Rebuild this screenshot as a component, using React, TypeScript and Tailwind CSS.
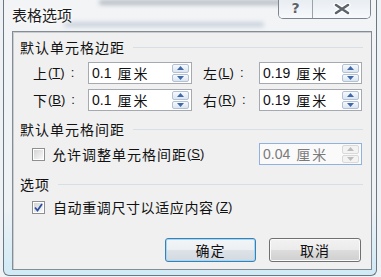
import React from "react";

const latin = "font-['Liberation_Sans','Noto_Sans_CJK_SC',sans-serif]";
const cjk = "font-['Noto_Sans_CJK_SC','Liberation_Sans',sans-serif]";

const Spinner = ({ disabled = false }: { disabled?: boolean }) => {
  const arrow = disabled ? "#bdbdbd" : "#3f69a8";
  const face = disabled
    ? "border-[#d9d9d9] bg-[#f3f3f3]"
    : "border-[#b3c1d3] bg-gradient-to-b from-[#f7fafd] to-[#dbe5f1]";
  return (
    <div className="flex flex-col gap-px w-[17px] py-px">
      <div className={`flex-1 flex items-center justify-center border rounded-[2px] ${face}`}>
        <svg width="7" height="4" viewBox="0 0 7 4">
          <path d="M0 4 L3.5 0 L7 4 Z" fill={arrow} />
        </svg>
      </div>
      <div className={`flex-1 flex items-center justify-center border rounded-[2px] ${face}`}>
        <svg width="7" height="4" viewBox="0 0 7 4">
          <path d="M0 0 L3.5 4 L7 0 Z" fill={arrow} />
        </svg>
      </div>
    </div>
  );
};

const SpinBox = ({
  value,
  className,
  disabled = false,
}: {
  value: string;
  className: string;
  disabled?: boolean;
}) => (
  <div
    className={`flex items-stretch h-[22px] border pl-[3px] pr-[2px] ${
      disabled ? "border-[#8fb3de] bg-[#fafafa] text-[#7a7a7a]" : "border-[#a5a9b0] bg-white text-[#111]"
    } ${className}`}
  >
    <div className="flex-1 flex items-center">
      <span className={`${latin} text-[14px]`}>{value}</span>
      <span className={`${cjk} text-[14px] tracking-[2px] ml-[6px]`}>厘米</span>
    </div>
    <Spinner disabled={disabled} />
  </div>
);

const Label = ({ ch, hot }: { ch: string; hot: string }) => (
  <div className="flex items-center text-[#111]">
    <span className={`${cjk} text-[14px]`}>{ch}</span>
    <span className={`${latin} text-[13px] ml-[1px]`}>
      (<span className="underline underline-offset-[1px]">{hot}</span>)
    </span>
    <span className={`${latin} text-[13px] ml-[6px]`}>:</span>
  </div>
);

const Section = ({ title }: { title: string }) => (
  <div className="flex items-center h-[20px] gap-[8px]">
    <span className={`${cjk} text-[14px] tracking-[1px] text-[#111]`}>{title}</span>
    <div className="flex-1 h-px bg-[#d6dee6]" />
  </div>
);

const CheckBox = ({ checked = false }: { checked?: boolean }) => (
  <div className="w-[13px] h-[13px] border border-[#8e8f8f] bg-white p-px shrink-0">
    <div className="w-full h-full bg-gradient-to-br from-[#d4d4d4] to-[#f9f9f9] flex items-center justify-center">
      {checked && (
        <svg width="9" height="9" viewBox="0 0 9 9">
          <path d="M1 4.5 L3.5 7.5 L8 1" stroke="#2c4fa0" strokeWidth="1.8" fill="none" />
        </svg>
      )}
    </div>
  </div>
);

export default function App() {
  return (
    <div className="w-[381px] h-[277px] bg-[#eef2f5] overflow-hidden">
      <div className="ml-[3px] mr-[4px] h-[276px] flex flex-col border-x border-b border-[#6d7782] rounded-b-[6px] bg-[linear-gradient(to_bottom,#f2f4f6_0%,#eef2f5_75%,#cfeaf6_100%)]">
        {/* title bar, with the blurred page behind the glass */}
        <div className="relative h-[31px] shrink-0 flex justify-between">
          <div className="absolute left-[95px] top-[0px] w-[190px] h-[5px] rounded-full blur-[2px] bg-[#7d8894] opacity-50" />
          <div className="absolute left-[60px] top-[22px] w-[200px] h-[5px] rounded-full blur-[2px] bg-[#8fa0b5] opacity-40" />
          <div className={`relative pl-[8px] pt-[4px] ${cjk} text-[15px] text-[#1b1b1b] [text-shadow:0_0_6px_#fff,0_0_3px_#fff]`}>
            表格选项
          </div>
          <div className="relative flex h-[19px] mr-[5px] border-x border-b border-[#7d8590] rounded-b-[5px] overflow-hidden shadow-[inset_0_-1px_0_#ffffff]">
            <div className="w-[34px] flex items-center justify-center border-r border-[#9aa2ab] bg-[linear-gradient(to_bottom,#e8edf2,#f7f9fb)]">
              <span className="font-['DejaVu_Sans',sans-serif] font-bold text-[14px] text-[#5d6268] [text-shadow:0_0_1px_#fff,0_0_2px_#fff] leading-none mt-[-2px]">
                ?
              </span>
            </div>
            <div className="w-[57px] flex items-center justify-center bg-[linear-gradient(to_bottom,#e8edf2,#f7f9fb)]">
              <svg width="18" height="12" viewBox="0 0 18 12">
                <path d="M3 2 L15 10 M15 2 L3 10" stroke="#ffffff" strokeWidth="5" strokeLinecap="round" />
                <path d="M3 2 L15 10 M15 2 L3 10" stroke="#5e646b" strokeWidth="2.6" strokeLinecap="round" />
              </svg>
            </div>
          </div>
        </div>

        {/* client area */}
        <div className="flex-1 ml-[8px] mr-[4px] mb-[5px] border border-[#868c93] bg-[#f0f0f0] shadow-[inset_1px_1px_0_#c9cdd2] flex flex-col pl-[7px] pr-[8px] pt-[5px]">
          <Section title="默认单元格边距" />
          <div className="flex items-center mt-[5px]">
            <div className="ml-[13px] w-[55px]">
              <Label ch="上" hot="T" />
            </div>
            <SpinBox value="0.1" className="w-[104px]" />
            <div className="ml-[11px] w-[56px]">
              <Label ch="左" hot="L" />
            </div>
            <SpinBox value="0.19" className="w-[103px]" />
          </div>
          <div className="flex items-center mt-[5px]">
            <div className="ml-[13px] w-[55px]">
              <Label ch="下" hot="B" />
            </div>
            <SpinBox value="0.1" className="w-[104px]" />
            <div className="ml-[11px] w-[56px]">
              <Label ch="右" hot="R" />
            </div>
            <SpinBox value="0.19" className="w-[103px]" />
          </div>

          <div className="mt-[8px]">
            <Section title="默认单元格间距" />
          </div>
          <div className="flex items-center mt-[4px]">
            <div className="ml-[12px]">
              <CheckBox />
            </div>
            <span className={`ml-[7px] ${cjk} text-[14px] tracking-[1px] text-[#111]`}>允许调整单元格间距</span>
            <span className={`${latin} text-[13px] text-[#111]`}>
              (<span className="underline underline-offset-[1px]">S</span>)
            </span>
            <SpinBox value="0.04" className="w-[103px] ml-auto mr-[1px]" disabled />
          </div>

          <div className="mt-[9px]">
            <Section title="选项" />
          </div>
          <div className="flex items-center h-[20px] mt-[3px]">
            <div className="ml-[12px]">
              <CheckBox checked />
            </div>
            <span className={`ml-[8px] ${cjk} text-[14px] tracking-[0.6px] text-[#111]`}>自动重调尺寸以适应内容</span>
            <span className={`${latin} text-[13px] text-[#111] ml-[2px]`}>
              (<span className="underline underline-offset-[1px]">Z</span>)
            </span>
          </div>

          <div className="flex mt-[21px] ml-[145px] gap-[13px]">
            <button className={`w-[91px] h-[24px] rounded-[3px] border border-[#3c7fb1] shadow-[inset_0_0_0_1px_#9fd8f8] bg-[linear-gradient(to_bottom,#f3f5f7_0%,#ecf0f3_50%,#dde3e8_50%,#d3dae0_100%)] ${cjk} text-[14px] tracking-[1px] text-[#111]`}>
              确定
            </button>
            <button className={`w-[92px] h-[24px] rounded-[3px] border border-[#707070] shadow-[inset_0_0_0_1px_#fbfbfb] bg-[linear-gradient(to_bottom,#f2f2f2_0%,#ebebeb_50%,#dddddd_50%,#cfcfcf_100%)] ${cjk} text-[14px] tracking-[1px] text-[#111]`}>
              取消
            </button>
          </div>
        </div>
      </div>
    </div>
  );
}
